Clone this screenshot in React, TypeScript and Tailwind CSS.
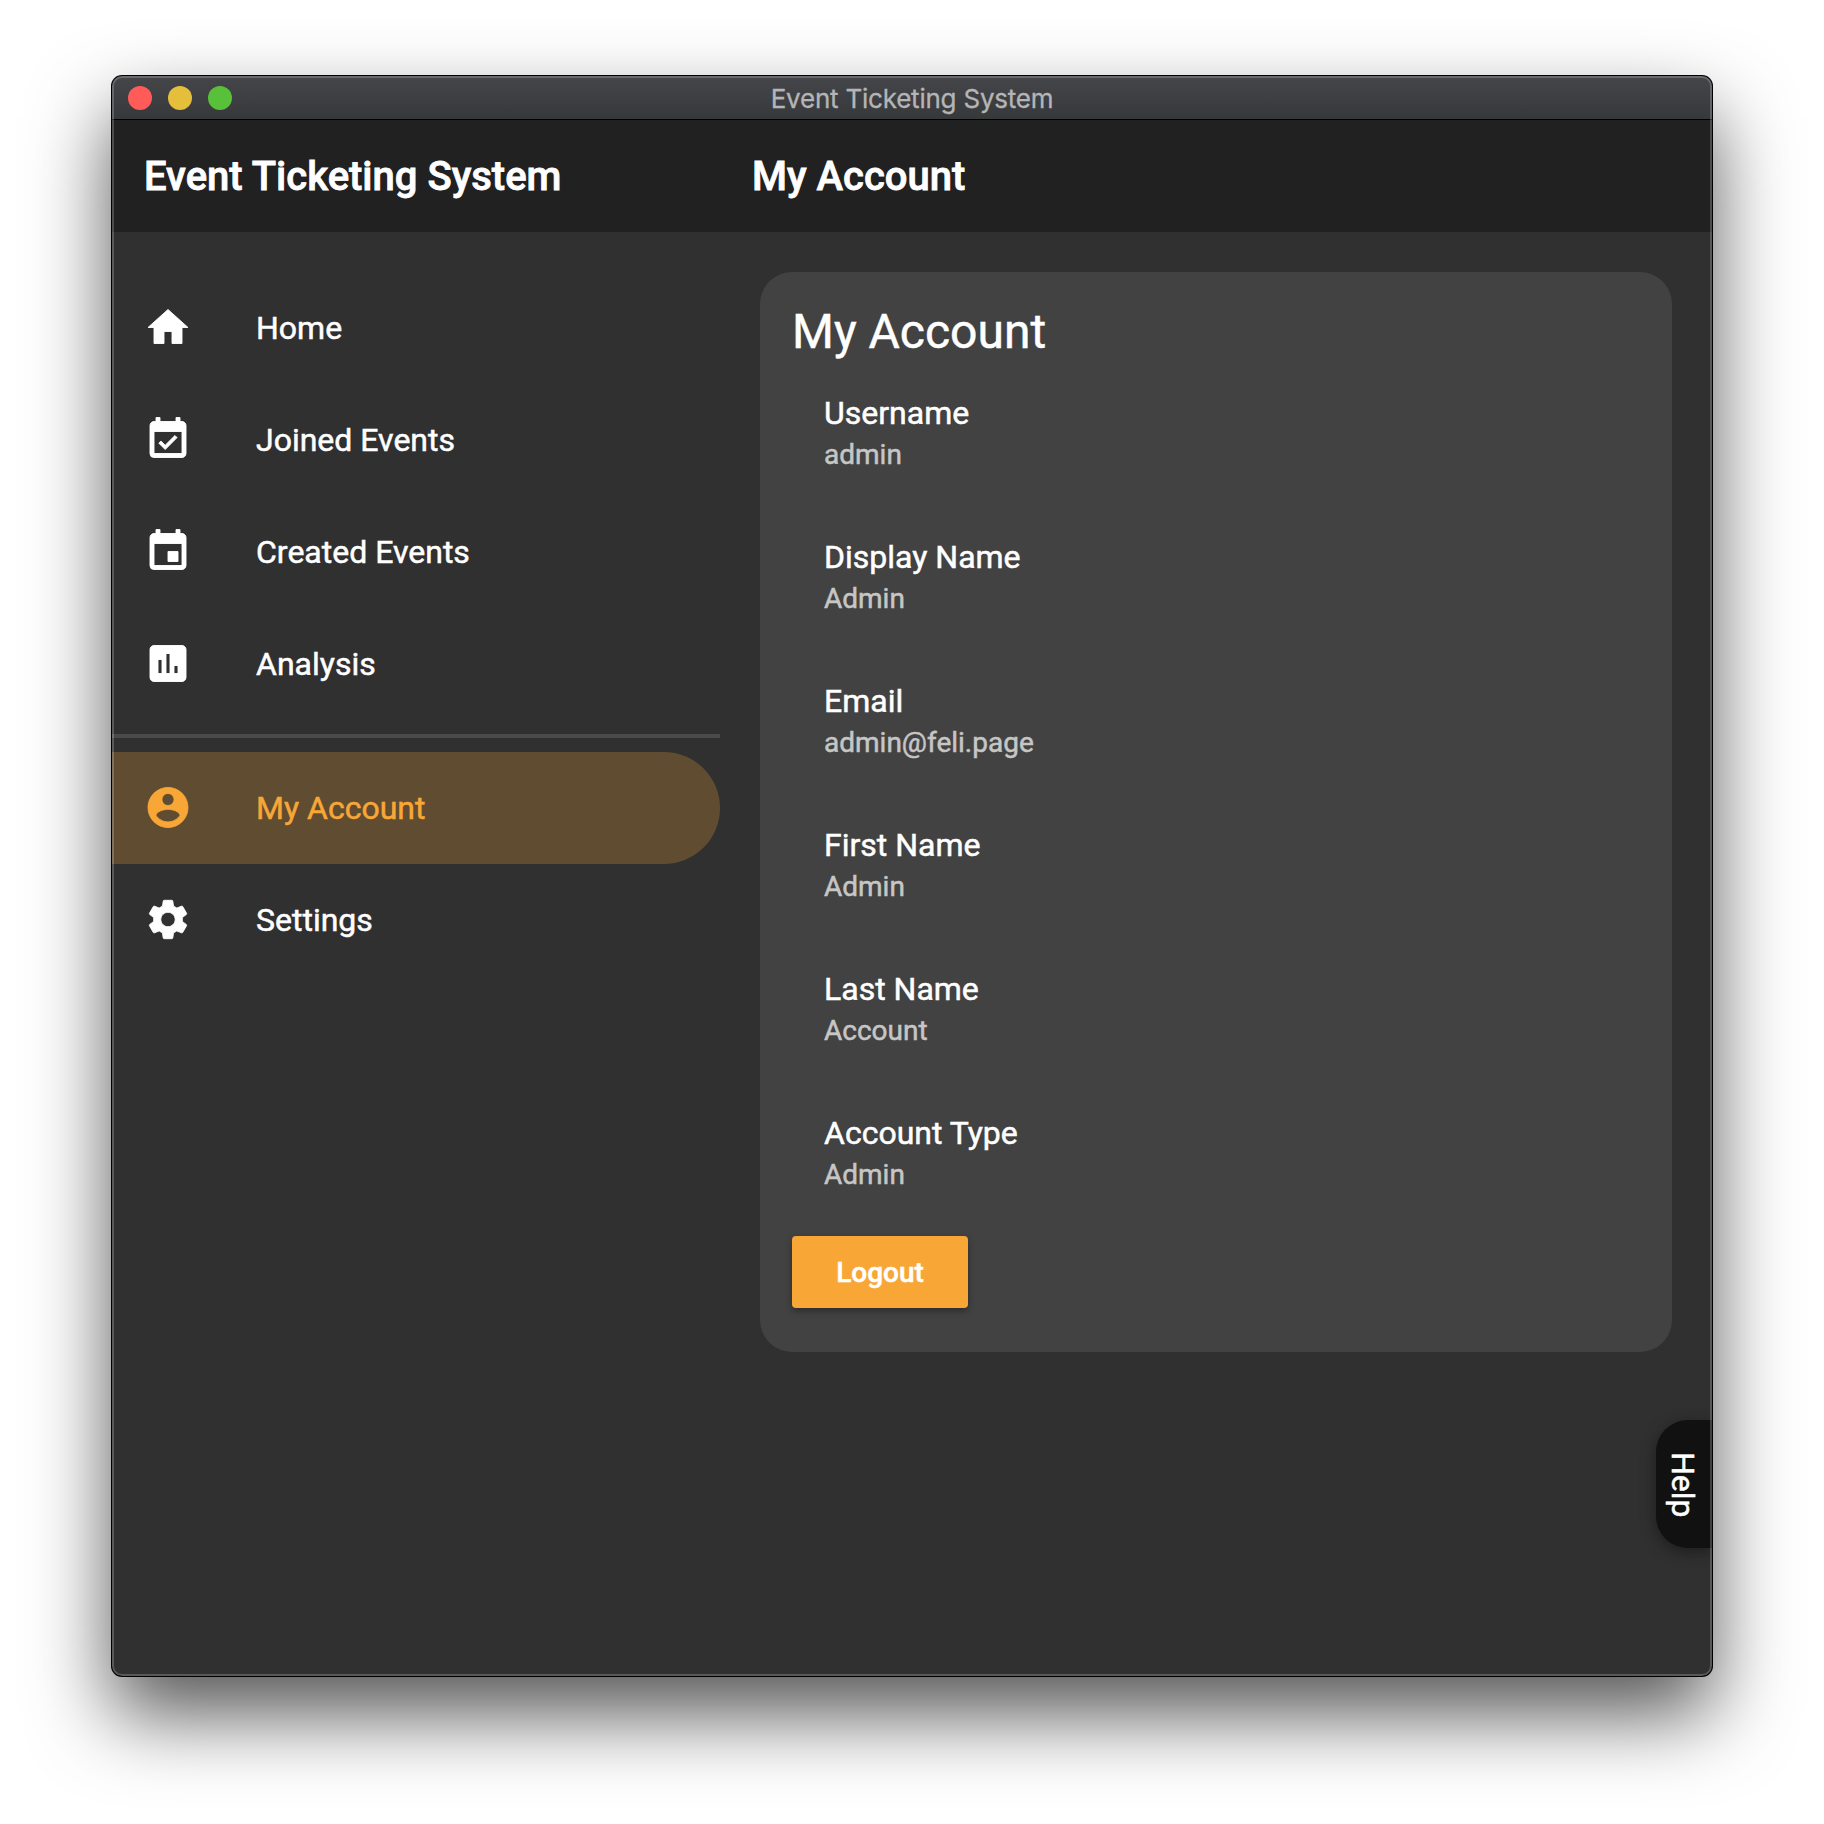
import type { ComponentType } from "react";
import {
  MdHome,
  MdEventAvailable,
  MdEvent,
  MdAssessment,
  MdSettings,
} from "react-icons/md";

type IconProps = { className?: string };

type NavItem = {
  label: string;
  icon: ComponentType<IconProps>;
  active?: boolean;
};

function AccountIcon({ className }: IconProps) {
  return (
    <svg viewBox="0 0 24 24" fill="currentColor" stroke="currentColor" className={className}>
      <path d="M12 2C6.48 2 2 6.48 2 12s4.48 10 10 10 10-4.48 10-10S17.52 2 12 2zm0 3c1.66 0 3 1.34 3 3s-1.34 3-3 3-3-1.34-3-3 1.34-3 3-3zm0 14.2c-2.5 0-4.71-1.28-6-3.22.03-1.99 4-3.08 6-3.08 1.99 0 5.97 1.09 6 3.08-1.29 1.94-3.5 3.22-6 3.22z" />
    </svg>
  );
}

const primaryNav: NavItem[] = [
  { label: "Home", icon: MdHome },
  { label: "Joined Events", icon: MdEventAvailable },
  { label: "Created Events", icon: MdEvent },
  { label: "Analysis", icon: MdAssessment },
];

const accountNav: NavItem[] = [
  { label: "My Account", icon: AccountIcon, active: true },
  { label: "Settings", icon: MdSettings },
];

const fields = [
  { label: "Username", value: "admin" },
  { label: "Display Name", value: "Admin" },
  { label: "Email", value: "admin@feli.page" },
  { label: "First Name", value: "Admin" },
  { label: "Last Name", value: "Account" },
  { label: "Account Type", value: "Admin" },
];

function NavLink({ label, icon: Icon, active }: NavItem) {
  return (
    <a
      className={
        active
          ? "flex h-28 items-center gap-16 rounded-r-full bg-[#604d31] pl-8 text-[#f8a737]"
          : "flex h-28 items-center gap-16 pl-8 text-white"
      }
    >
      <Icon className="size-12 shrink-0 -translate-y-[0.5px] [stroke-linejoin:bevel] [stroke-width:0.45] [&>path[fill=none]]:[stroke:none]" />
      <span className="text-[32px] leading-10">{label}</span>
    </a>
  );
}

function TitleBar() {
  return (
    <div className="relative flex h-11 shrink-0 items-center border-b border-black bg-linear-to-b from-[#45464a] to-[#37383a] pl-4">
      <div className="flex gap-4">
        <span className="size-6 rounded-full bg-[#ff5c59]" />
        <span className="size-6 rounded-full bg-[#e5bf3c]" />
        <span className="size-6 rounded-full bg-[#59c139]" />
      </div>
      <div className="absolute inset-0 flex items-center justify-center pt-0.5 font-[Inter,sans-serif] text-[26px] leading-none tracking-[-0.22px] text-[#b4b5b7] [-webkit-text-stroke:0.3px]">
        Event Ticketing System
      </div>
    </div>
  );
}

export default function App() {
  return (
    <div className="flex h-[1824px] w-[1824px] justify-center overflow-hidden bg-white pt-[76px] font-[Roboto,sans-serif] [-webkit-text-stroke:0.5px]">
      <div className="relative flex size-[1600px] flex-col overflow-hidden rounded-[10px] bg-[#303030] shadow-[0_0_0_1px_#000,0_38px_80px_rgba(0,0,0,0.67)]">
        <TitleBar />
        <header className="flex h-28 shrink-0 items-center bg-[#212121] pt-0.5 text-[40px] font-medium text-white [-webkit-text-stroke:0.8px]">
          <h1 className="w-[608px] pl-8">Event Ticketing System</h1>
          <h2 className="pl-8">My Account</h2>
        </header>
        <div className="flex flex-1">
          <nav className="w-[608px] pt-10">
            {primaryNav.map((item) => (
              <NavLink key={item.label} {...item} />
            ))}
            <div className="my-3.5 h-1 bg-[#4a4a4a]" />
            {accountNav.map((item) => (
              <NavLink key={item.label} {...item} />
            ))}
          </nav>
          <main className="flex-1 p-10">
            <section className="h-[1080px] rounded-[32px] bg-[#424242] px-8 pt-7">
              <h3 className="text-[48px] leading-16 text-white">My Account</h3>
              <dl className="px-8">
                {fields.map((f) => (
                  <div key={f.label} className="flex h-36 flex-col gap-0.5 pt-[29px]">
                    <dt className="text-[32px] leading-10 text-white">{f.label}</dt>
                    <dd className="text-[28px] leading-10 text-[#c6c6c6]">{f.value}</dd>
                  </div>
                ))}
              </dl>
              <button className="mt-2 h-[72px] w-44 rounded bg-[#f8a737] pt-0.5 text-[28px] font-medium text-white shadow-[0_3px_6px_rgba(0,0,0,0.35)]">
                Logout
              </button>
            </section>
          </main>
        </div>
        <button className="absolute top-[1344px] right-0 flex h-32 w-14 items-center justify-center rounded-l-[32px] bg-[#111111] pt-0.5 pr-0.5 text-[32px] text-white shadow-[0_4px_16px_rgba(0,0,0,0.4)] [writing-mode:vertical-rl]">
          Help
        </button>
        <div className="pointer-events-none absolute inset-0 rounded-[10px] border-2 border-white/20" />
      </div>
    </div>
  );
}
